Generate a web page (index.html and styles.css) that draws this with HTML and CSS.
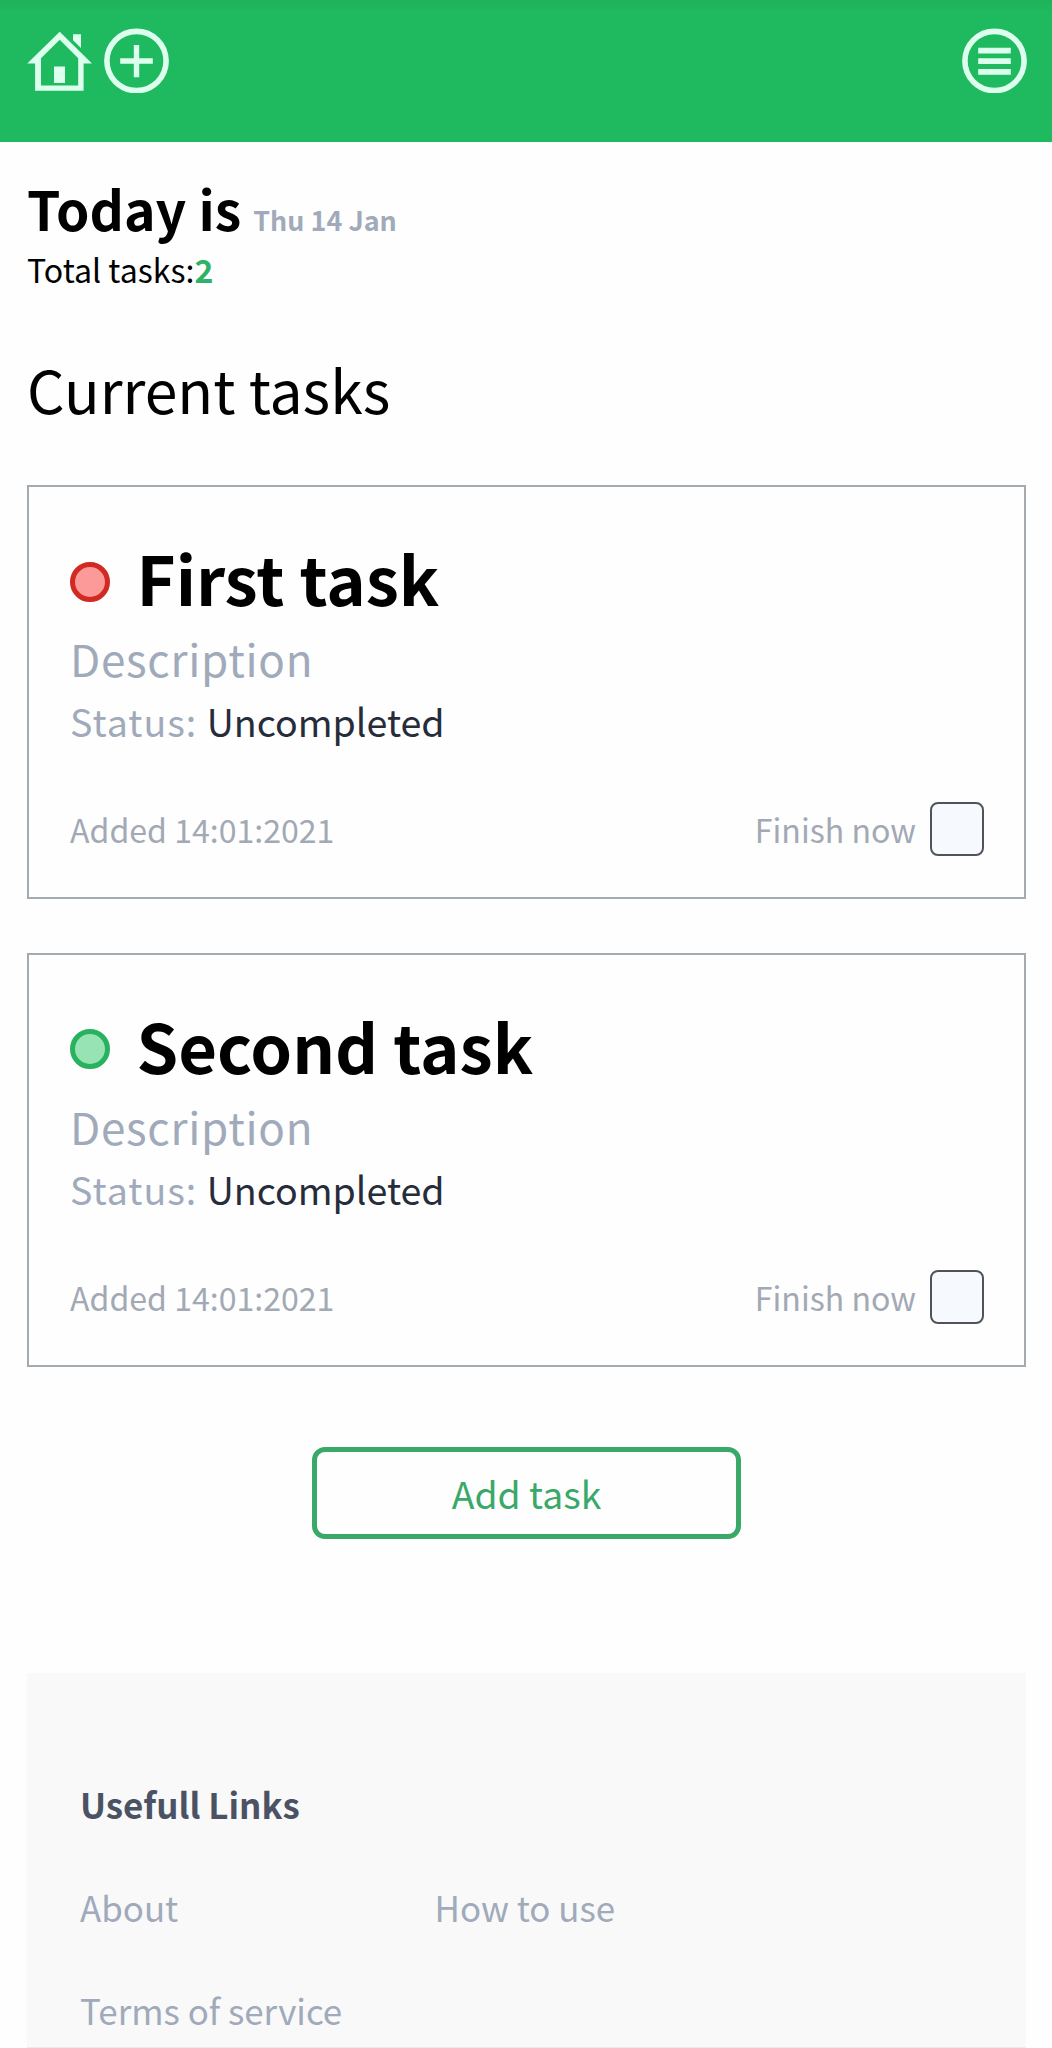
FILE: index.html
```html
<!DOCTYPE html>
<html lang="en">
<head>
<meta charset="utf-8">
<title>Current tasks</title>
<link rel="stylesheet" href="styles.css">
</head>
<body>
<header class="topbar">
  <nav class="topbar-group">
    <svg class="icon" viewBox="0 0 65 65"><path fill-rule="evenodd" d="M32.7 3.8 65 35.5H56.6V62.7H8.1V35.5H0.2ZM32.7 11.8 14 30.3V57.5H51.2V30.3ZM27 38.5H38V55H27ZM46 6.2H54V20L46 12.2Z"/></svg>
    <svg class="icon" viewBox="0 0 65 65"><circle class="ring" cx="32.5" cy="33" r="29.6"/><path d="M29.8 17H35.2V30.3H48.8V35.7H35.2V49.3H29.8V35.7H16.2V30.3H29.8Z"/></svg>
  </nav>
  <svg class="icon" viewBox="0 0 65 65"><circle class="ring" cx="32.5" cy="33" r="29.6"/><path d="M16.2 19.8H48.8V25.5H16.2ZM16.2 30.3H48.8V36H16.2ZM16.2 41H48.8V46.7H16.2Z"/></svg>
</header>
<main class="page">
  <h1 class="today">Today is <span class="date">Thu 14 Jan</span></h1>
  <p class="total">Total tasks:<b class="count">2</b></p>
  <h2 class="section-title">Current tasks</h2>
  <article class="card">
    <div class="card-head"><span class="dot dot-red"></span><h3 class="card-title">First task</h3></div>
    <p class="description">Description</p>
    <p class="status"><span class="status-label">Status: </span>Uncompleted</p>
    <div class="card-foot"><span>Added 14:01:2021</span><label class="finish">Finish now<input class="check" type="checkbox"></label></div>
  </article>
  <article class="card">
    <div class="card-head"><span class="dot dot-green"></span><h3 class="card-title">Second task</h3></div>
    <p class="description">Description</p>
    <p class="status"><span class="status-label">Status: </span>Uncompleted</p>
    <div class="card-foot"><span>Added 14:01:2021</span><label class="finish">Finish now<input class="check" type="checkbox"></label></div>
  </article>
  <button class="add" type="button">Add task</button>
  <footer class="footer">
    <h4 class="footer-title">Usefull Links</h4>
    <div class="links"><a>About</a><a>How to use</a><a>Terms of service</a></div>
  </footer>
</main>
</body>
</html>
```
FILE: styles.css
```css
* { box-sizing: border-box; margin: 0; padding: 0; }

body {
  height: 2048px;
  overflow: hidden;
  display: flex;
  flex-direction: column;
  background: #fefefe;
  color: #000;
  font-family: "Noto Sans CJK SC", "Noto Sans", sans-serif;
}

.topbar {
  flex: none;
  height: 142px;
  padding: 28px 25px 0 27px;
  display: flex;
  justify-content: space-between;
  align-items: flex-start;
  background: linear-gradient(#1fb25b, #1fb95f 12px);
}
.topbar-group { display: flex; gap: 12px; }
.icon { width: 65px; height: 65px; fill: #dcffee; }
.ring { fill: none; stroke: #dcffee; stroke-width: 5.6; }

.page {
  flex: 1;
  padding: 30px 26px 0 27px;
  display: flex;
  flex-direction: column;
}
.today { font-size: 53.5px; line-height: 72px; }
.date { font-size: 26.9px; line-height: 1; color: #a0aaba; }
.total { margin-top: 1px; font-size: 32.1px; line-height: 48px; }
.count { color: #2fb268; }
.section-title { margin: 56px 0; font-size: 58.9px; font-weight: 400; line-height: 80px; }

.card {
  height: 414px;
  margin-bottom: 53.5px;
  padding: 50px 40px 40px 41px;
  border: 2px solid #a3abb0;
}
.card-head { display: flex; align-items: center; gap: 26.5px; }
.card-title { font-size: 66.9px; line-height: 79px; }
.dot { width: 40px; height: 40px; margin-top: 10px; border: 5px solid; border-radius: 50%; }
.dot-red { border-color: #d12a22; background: #fb9a98; }
.dot-green { border-color: #28b25f; background: #98e3b3; }
.description { margin-top: 12px; font-size: 44px; line-height: 60px; letter-spacing: 0.7px; color: #a0aaba; }
.status { margin-top: 6px; font-size: 37.6px; line-height: 54px; color: #272c3a; }
.status-label { letter-spacing: 1px; color: #a0aaba; }
.card-foot {
  margin-top: 54px;
  display: flex;
  justify-content: space-between;
  font-size: 32.1px;
  line-height: 54px;
  color: #a2a9b4;
}
.finish { display: flex; gap: 14px; }
.check {
  appearance: none;
  width: 54px;
  height: 54px;
  border: 2px solid #50545a;
  border-radius: 8px;
  background: #f6faff;
}

.add {
  align-self: center;
  width: 429px;
  height: 92px;
  margin: 27px 0 134px;
  border: 5px solid #3aa869;
  border-radius: 13px;
  background: #fefefe;
  color: #3aa869;
  font: 37.3px/54px "Noto Sans CJK SC", "Noto Sans", sans-serif;
}

.footer {
  flex: 1;
  padding: 104px 53px 0;
  background: #f9f9f9;
  border-bottom: 1px solid #ececec;
}
.footer-title { font-size: 34.9px; line-height: 54px; color: #4a5263; }
.links {
  margin-top: 49px;
  display: grid;
  grid-template-columns: 354.5px 1fr;
  row-gap: 49.4px;
  font-size: 34.9px;
  line-height: 54px;
  color: #a0aaba;
}
```
